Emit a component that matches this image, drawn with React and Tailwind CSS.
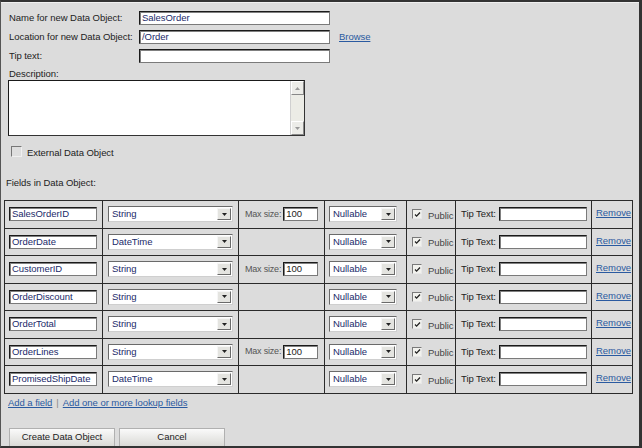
import React from "react";

const font = { fontFamily: "'Liberation Sans', Arial, sans-serif", fontSize: "9.5px", letterSpacing: "-0.05px" };

function TextBox({ value = "", className = "" }) {
  return (
    <div
      className={`shrink-0 h-[14px] bg-white border border-[#1a1a1a] border-r-[#7a7a7a] border-b-[#7a7a7a] shadow-[inset_1px_1px_0_#808080] leading-[12px] pl-[2px] text-[#1a2a6a] overflow-hidden whitespace-nowrap ${className}`}
    >
      {value}
    </div>
  );
}

function Select({ value, className = "" }) {
  return (
    <div
      className={`shrink-0 h-[16px] bg-white border border-[#6a6a6a] border-r-[#cfcfcf] border-b-[#cfcfcf] flex items-center text-[#1a2a6a] ${className}`}
    >
      <div className="flex-1 pl-[3px] leading-[12px] overflow-hidden whitespace-nowrap">{value}</div>
      <div className="w-[14px] h-[12px] mr-[1px] bg-[#e4e4e0] border border-[#f6f6f6] border-r-[#6a6a6a] border-b-[#6a6a6a] flex items-center justify-center">
        <svg width="5" height="3" viewBox="0 0 5 3">
          <path d="M0 0h5L2.5 3z" fill="#222" />
        </svg>
      </div>
    </div>
  );
}

function Check({ checked }) {
  return (
    <div className="shrink-0 w-[10px] h-[10px] bg-[#f2f2ee] border border-[#7a7a7a] border-r-[#e8e8e8] border-b-[#e8e8e8] flex items-center justify-center">
      {checked && (
        <svg width="7" height="7" viewBox="0 0 7 7">
          <path d="M1 3.5l1.6 1.6L6 1.5" stroke="#222" strokeWidth="1.3" fill="none" />
        </svg>
      )}
    </div>
  );
}

function Link({ children, className = "" }) {
  return <span className={`text-[#2a5aa0] underline whitespace-nowrap ${className}`}>{children}</span>;
}

const rows = [
  { name: "SalesOrderID", type: "String", max: true },
  { name: "OrderDate", type: "DateTime", max: false },
  { name: "CustomerID", type: "String", max: true },
  { name: "OrderDiscount", type: "String", max: false },
  { name: "OrderTotal", type: "String", max: false },
  { name: "OrderLines", type: "String", max: true },
  { name: "PromisedShipDate", type: "DateTime", max: false },
];

const cell = "border-r border-b border-[#2a2a2a] flex items-center h-full whitespace-nowrap overflow-hidden";

export default function App() {
  return (
    <div
      style={font}
      className="w-[642px] h-[448px] bg-[#dcdcdc] border-t-2 border-t-[#333] border-l border-l-[#555] border-r-[3px] border-r-[#333] border-b-2 border-b-[#333] text-[#222] overflow-hidden"
    >
      <div className="h-px bg-[#f0f0f0]" />
      <div className="pl-[7px] pt-[8px]">
        {[
          ["Name for new Data Object:", "SalesOrder", false],
          ["Location for new Data Object:", "/Order", true],
          ["Tip text:", "", false],
        ].map(([label, val, browse]) => (
          <div key={label} className="h-[19px] flex items-start">
            <div className="w-[131px] shrink-0 leading-[14px] pl-px whitespace-nowrap">{label}</div>
            <TextBox value={val} className="w-[191px]" />
            {browse && <Link className="ml-[9px] leading-[14px]">Browse</Link>}
          </div>
        ))}
        <div className="h-[12px] leading-[12px] pl-px">Description:</div>
        <div className="w-[297px] h-[56px] bg-white border border-[#1a1a1a] border-r-[#333] border-b-[#333] flex justify-end">
          <div className="w-[14px] h-full bg-[#ecece6] flex flex-col justify-between border-l border-[#d0d0d0]">
            <div className="h-[14px] bg-[#ecece8] border border-[#fff] border-r-[#888] border-b-[#888] flex items-center justify-center">
              <svg width="5" height="3" viewBox="0 0 5 3">
                <path d="M0 3h5L2.5 0z" fill="#999" />
              </svg>
            </div>
            <div className="h-[14px] bg-[#ecece8] border border-[#fff] border-r-[#888] border-b-[#888] flex items-center justify-center">
              <svg width="5" height="3" viewBox="0 0 5 3">
                <path d="M0 0h5L2.5 3z" fill="#999" />
              </svg>
            </div>
          </div>
        </div>
        <div className="flex items-center mt-[9px] pl-[3px] h-[12px]">
          <div className="w-[11px] h-[11px] bg-[#dedede] border border-[#777] border-r-[#f0f0f0] border-b-[#f0f0f0]" />
          <span className="ml-[5px] leading-[12px] mt-[3px]">External Data Object</span>
        </div>
        <div className="mt-[20px] h-[12px] leading-[12px] -ml-[2px]">Fields in Data Object:</div>
      </div>
      <div className="ml-[3px] mt-[11px] w-[629px] border-t border-l border-[#2a2a2a]">
        {rows.map((r) => (
          <div
            key={r.name}
            className="grid h-[27.5px] grid-cols-[98px_136px_86px_82px_49px_136px_41px]"
          >
            <div className={`${cell} pl-[4px]`}>
              <TextBox value={r.name} className="w-[88px]" />
            </div>
            <div className={`${cell} pl-[5px]`}>
              <Select value={r.type} className="w-[125px]" />
            </div>
            <div className={`${cell} pl-[6px]`}>
              {r.max && (
                <>
                  <span className="text-[#555] text-[9px] tracking-[-0.2px] mr-[2px]">Max size:</span>
                  <TextBox value="100" className="w-[35px] text-[#222]" />
                </>
              )}
            </div>
            <div className={`${cell} pl-[4px]`}>
              <Select value="Nullable" className="w-[68px]" />
            </div>
            <div className={`${cell} pl-[5px]`}>
              <Check checked />
              <span className="ml-[6px] mt-[3px] text-[#444]">Public</span>
            </div>
            <div className={`${cell} pl-[5px]`}>
              <span className="mr-[3px]">Tip Text:</span>
              <TextBox className="w-[88px]" />
            </div>
            <div className={`${cell} pl-[4px] items-start pt-[5px]`}>
              <Link>Remove</Link>
            </div>
          </div>
        ))}
      </div>
      <div className="pl-[7px] mt-[3px] flex items-center gap-[4px] h-[14px]">
        <Link>Add a field</Link>
        <span className="text-[#888]">|</span>
        <Link>Add one or more lookup fields</Link>
      </div>
      <div className="pl-[8px] mt-[17px] flex gap-[4px]">
        {["Create Data Object", "Cancel"].map((t) => (
          <div
            key={t}
            className="w-[106px] h-[19px] bg-gradient-to-b from-[#fafafa] to-[#dadad6] border border-[#b0b0b0] border-b-[#888] flex items-center justify-center text-[#222]"
          >
            {t}
          </div>
        ))}
      </div>
    </div>
  );
}
